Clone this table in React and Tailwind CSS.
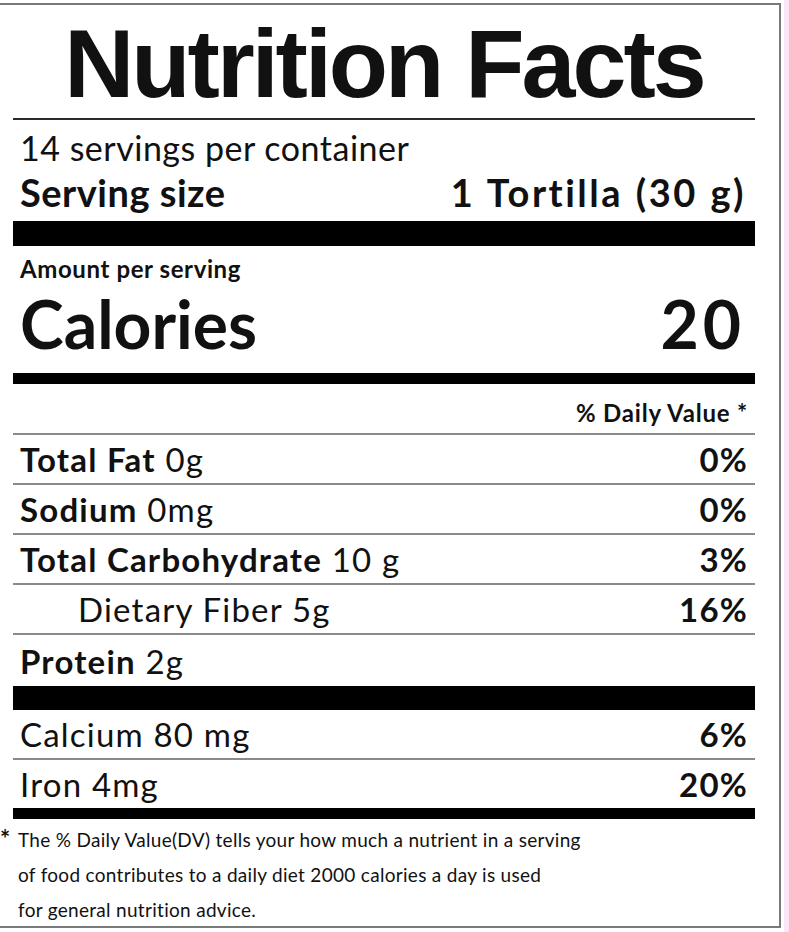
import React from "react";

const body = { fontFamily: "Lato, 'Open Sans', sans-serif" };

const rows = [
  { name: "Total Fat", amount: "0g", dv: "0%", bold: true },
  { name: "Sodium", amount: "0mg", dv: "0%", bold: true },
  { name: "Total Carbohydrate", amount: "10 g", dv: "3%", bold: true },
  { name: "Dietary Fiber 5g", amount: "", dv: "16%", indent: true },
];

const Row = ({ item, last }) => (
  <>
    <div className="flex h-[48px] items-center justify-between pl-[7px] pr-[7px] pt-[2px] text-[33px] tracking-[1.2px]">
      <div className={item.indent ? "pl-[58px]" : ""}>
        {item.bold ? <span className="font-bold">{item.name}</span> : item.name}
        {item.amount && " " + item.amount}
      </div>
      <div className="font-bold">{item.dv}</div>
    </div>
    {!last && <div className="h-[2px] bg-[#8a8a8a]" />}
  </>
);

export default function App() {
  return (
    <div className="flex h-[932px] w-[789px] bg-white text-[#111]" style={body}>
      <div className="mt-[3px] h-[925px] w-[781px] border-t-2 border-r-2 border-b-2 border-[#7a7a7a] bg-white">
        <div className="w-[742px] ml-[13px]">
          <div className="flex h-[113px] items-center justify-center pt-[4px]">
            <h1
              className="text-[97px] font-bold leading-none tracking-[-3px]"
              style={{ fontFamily: "'Liberation Sans', Arial, sans-serif" }}
            >
              Nutrition Facts
            </h1>
          </div>
          <div className="h-[2px] bg-[#2a2a2a]" />

          <div className="flex h-[101px] flex-col justify-center px-[7px]">
            <div className="text-[34px] leading-[42px] tracking-[0.5px]">14 servings per container</div>
            <div className="flex justify-between text-[38px] font-bold leading-[46px]">
              <span className="tracking-[0.5px]">Serving size</span>
              <span className="pr-[2px] tracking-[2.5px] [word-spacing:1px]">1 Tortilla (30 g)</span>
            </div>
          </div>
          <div className="h-[25px] bg-black" />

          <div className="flex h-[127px] flex-col px-[7px] pt-[8px]">
            <div className="text-[24px] font-bold leading-[30px] tracking-[0.6px]">Amount per serving</div>
            <div className="flex items-center justify-between text-[66px] font-bold leading-[80px]">
              <span>Calories</span>
              <span className="pr-[3px] tracking-[4px]">20</span>
            </div>
          </div>
          <div className="h-[11px] bg-black" />

          <div className="flex h-[49px] items-center justify-end px-[7px] pt-[8px] text-[24px] font-bold tracking-[0.8px]">
            % Daily Value *
          </div>
          <div className="h-[2px] bg-[#8a8a8a]" />

          {rows.map((r) => (
            <Row key={r.name} item={r} />
          ))}

          <div className="flex h-[51px] items-center px-[7px] pt-[2px] text-[33px] tracking-[1.2px]">
            <span className="font-bold">Protein</span>&nbsp;2g
          </div>
          <div className="h-[24px] bg-black" />

          <Row item={{ name: "Calcium 80 mg", amount: "", dv: "6%" }} />
          <Row item={{ name: "Iron 4mg", amount: "", dv: "20%" }} last />
          <div className="h-[11px] bg-black" />
        </div>

        <div className="relative flex h-[102px] flex-col pl-[18px] pt-[3px] text-[19px] leading-[35px] tracking-[0.3px]">
          <span className="absolute left-0 top-[2px] text-[24px] font-bold">*</span>
          <div>The % Daily Value(DV) tells your how much a nutrient in a serving</div>
          <div>of food contributes to a daily diet 2000 calories a day is used</div>
          <div>for general nutrition advice.</div>
        </div>
      </div>
      <div className="w-[3px] bg-white" />
      <div className="flex-1 bg-[#fbe6f5]" />
    </div>
  );
}
